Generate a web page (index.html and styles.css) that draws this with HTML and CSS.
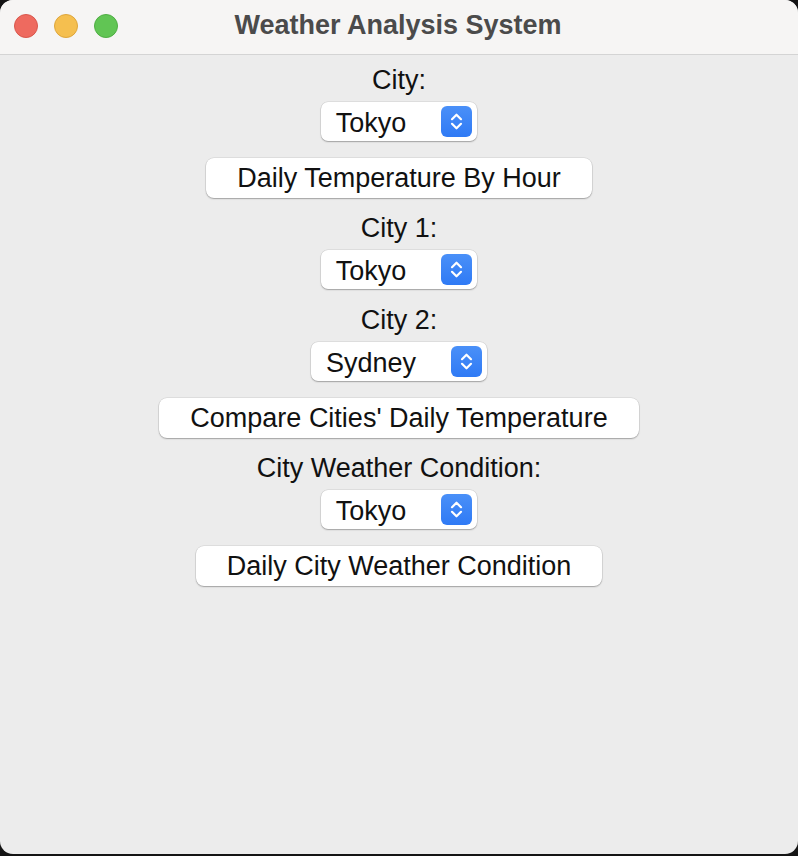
FILE: index.html
```html
<!DOCTYPE html>
<html>
<head>
<meta charset="utf-8">
<link rel="stylesheet" href="styles.css">
</head>
<body>
<div class="window">
  <div class="titlebar">
    <div class="lights">
      <span class="light red"></span>
      <span class="light yellow"></span>
      <span class="light green"></span>
    </div>
    <div class="title">Weather Analysis System</div>
  </div>
  <div class="content">
    <div class="label first">City:</div>
    <div class="select"><span class="val">Tokyo</span><span class="stepper"><svg width="31" height="31" viewBox="0 0 31 31"><path d="M11 13.2 L15.5 8.7 L20 13.2 M11 17.8 L15.5 22.3 L20 17.8" fill="none" stroke="#fff" stroke-width="2.2" stroke-linecap="round" stroke-linejoin="round"/></svg></span></div>
    <div class="btn">Daily Temperature By Hour</div>
    <div class="label">City 1:</div>
    <div class="select"><span class="val">Tokyo</span><span class="stepper"><svg width="31" height="31" viewBox="0 0 31 31"><path d="M11 13.2 L15.5 8.7 L20 13.2 M11 17.8 L15.5 22.3 L20 17.8" fill="none" stroke="#fff" stroke-width="2.2" stroke-linecap="round" stroke-linejoin="round"/></svg></span></div>
    <div class="label">City 2:</div>
    <div class="select"><span class="val">Sydney</span><span class="stepper"><svg width="31" height="31" viewBox="0 0 31 31"><path d="M11 13.2 L15.5 8.7 L20 13.2 M11 17.8 L15.5 22.3 L20 17.8" fill="none" stroke="#fff" stroke-width="2.2" stroke-linecap="round" stroke-linejoin="round"/></svg></span></div>
    <div class="btn">Compare Cities' Daily Temperature</div>
    <div class="label">City Weather Condition:</div>
    <div class="select"><span class="val">Tokyo</span><span class="stepper"><svg width="31" height="31" viewBox="0 0 31 31"><path d="M11 13.2 L15.5 8.7 L20 13.2 M11 17.8 L15.5 22.3 L20 17.8" fill="none" stroke="#fff" stroke-width="2.2" stroke-linecap="round" stroke-linejoin="round"/></svg></span></div>
    <div class="btn">Daily City Weather Condition</div>
  </div>
</div>
</body>
</html>
```
FILE: styles.css
```css
html, body {
  margin: 0;
  padding: 0;
  background: #141414;
  height: 856px;
  overflow: hidden;
}
.window {
  width: 798px;
  height: 854px;
  background: #ececec;
  border-radius: 13px;
  overflow: hidden;
  display: flex;
  flex-direction: column;
  font-family: "Liberation Sans", Arial, sans-serif;
}
.titlebar {
  height: 54px;
  flex: none;
  background: #f6f5f4;
  border-bottom: 1px solid #d4d4d4;
  display: flex;
  align-items: center;
  justify-content: center;
  position: relative;
}
.lights {
  position: absolute;
  left: 14px;
  top: 14px;
  display: flex;
  gap: 16px;
}
.light {
  width: 24px;
  height: 24px;
  border-radius: 50%;
  box-sizing: border-box;
}
.red { background: #ee6a5f; border: 1px solid #d9574c; }
.yellow { background: #f5bf4f; border: 1px solid #dea63b; }
.green { background: #61c554; border: 1px solid #4fae43; }
.title {
  font-weight: bold;
  font-size: 27px;
  color: #4b4b4b;
  margin-top: -3px;
  margin-right: 2px;
}
.content {
  display: flex;
  flex-direction: column;
  align-items: center;
  color: #111;
  font-size: 27px;
}
.label {
  height: 30px;
  line-height: 30px;
  margin-top: 16px;
}
.label.first { margin-top: 10px; }
.btn + .label { margin-top: 15px; }
.select {
  margin-top: 7px;
  height: 39px;
  box-sizing: border-box;
  background: #fff;
  border-radius: 7px;
  box-shadow: 0 0 0 0.5px rgba(0,0,0,0.12), 0 1px 1.5px rgba(0,0,0,0.28);
  display: flex;
  align-items: center;
  padding: 0 5px 0 15px;
}
.val {
  margin-right: 35px;
  line-height: 39px;
  padding-top: 3px;
}
.stepper {
  width: 31px;
  height: 31px;
  border-radius: 6px;
  background: linear-gradient(#4a90f8, #2f7af5);
  display: flex;
}
.btn {
  margin-top: 17px;
  height: 40px;
  line-height: 40px;
  box-sizing: border-box;
  padding: 0 31px;
  background: #fff;
  border-radius: 8px;
  box-shadow: 0 0 0 0.5px rgba(0,0,0,0.12), 0 1px 1.5px rgba(0,0,0,0.28);
}
```
